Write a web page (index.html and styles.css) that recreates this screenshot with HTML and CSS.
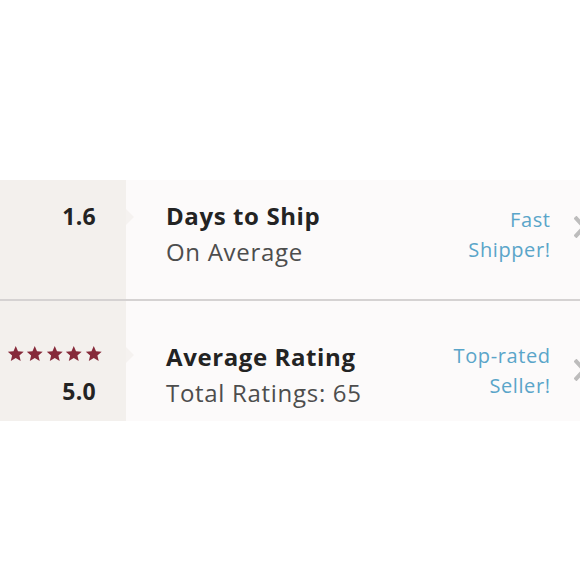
FILE: index.html
```html
<!DOCTYPE html>
<html>
<head>
<meta charset="utf-8">
<link rel="stylesheet" href="styles.css">
</head>
<body>
<div class="panel">
  <div class="row row-ship">
    <div class="score">
      <div class="num">1.6</div>
    </div>
    <div class="detail">
      <div class="text">
        <div class="title">Days to Ship</div>
        <div class="sub">On Average</div>
      </div>
      <div class="badge">Fast<br>Shipper!</div>
      <svg class="chev" width="14" height="22" viewBox="0 0 14 22"><polyline points="1,1 10,11 1,21" fill="none" stroke="#bdbcbc" stroke-width="4"/></svg>
    </div>
  </div>
  <div class="row row-rating">
    <div class="score">
      <div class="stars">
        <svg viewBox="0 0 24 24" class="star"><path d="M12 1.5l3.1 7.2 7.8.6-5.9 5.1 1.8 7.6L12 17.9 5.2 22l1.8-7.6L1.1 9.3l7.8-.6z"/></svg>
        <svg viewBox="0 0 24 24" class="star"><path d="M12 1.5l3.1 7.2 7.8.6-5.9 5.1 1.8 7.6L12 17.9 5.2 22l1.8-7.6L1.1 9.3l7.8-.6z"/></svg>
        <svg viewBox="0 0 24 24" class="star"><path d="M12 1.5l3.1 7.2 7.8.6-5.9 5.1 1.8 7.6L12 17.9 5.2 22l1.8-7.6L1.1 9.3l7.8-.6z"/></svg>
        <svg viewBox="0 0 24 24" class="star"><path d="M12 1.5l3.1 7.2 7.8.6-5.9 5.1 1.8 7.6L12 17.9 5.2 22l1.8-7.6L1.1 9.3l7.8-.6z"/></svg>
        <svg viewBox="0 0 24 24" class="star"><path d="M12 1.5l3.1 7.2 7.8.6-5.9 5.1 1.8 7.6L12 17.9 5.2 22l1.8-7.6L1.1 9.3l7.8-.6z"/></svg>
      </div>
      <div class="num">5.0</div>
    </div>
    <div class="detail">
      <div class="text">
        <div class="title">Average Rating</div>
        <div class="sub">Total Ratings: 65</div>
      </div>
      <div class="badge">Top-rated<br>Seller!</div>
      <svg class="chev" width="14" height="22" viewBox="0 0 14 22"><polyline points="1,1 10,11 1,21" fill="none" stroke="#bdbcbc" stroke-width="4"/></svg>
    </div>
  </div>
</div>
</body>
</html>
```

FILE: styles.css
```css
html, body {
  margin: 0;
  padding: 0;
  background: #ffffff;
  overflow: hidden;
  width: 580px;
  height: 580px;
}

body {
  font-family: "Open Sans", "Lato", sans-serif;
}

.panel {
  margin-top: 180px;
  width: 588px;
}

.row {
  display: grid;
  grid-template-columns: 126px 1fr;
  height: 120px;
  box-sizing: border-box;
}

.row-ship {
  height: 121px;
  border-bottom: 2px solid #d5d2d2;
}

.score {
  position: relative;
  background: #f3f0ed;
  padding-right: 30px;
  display: flex;
  flex-direction: column;
  align-items: flex-end;
}

.score::after {
  content: "";
  position: absolute;
  right: -8px;
  top: 29px;
  border-left: 8px solid #f5f2f0;
  border-top: 8px solid transparent;
  border-bottom: 8px solid transparent;
}

.row-rating .score::after {
  top: 46px;
}

.num {
  font-size: 23px;
  font-weight: 700;
  line-height: 36px;
  letter-spacing: 0.3px;
  color: #232323;
}

.row-ship .score {
  padding-top: 18px;
}

.row-rating .score {
  padding-top: 44px;
}

.stars {
  display: flex;
  gap: 2px;
  margin-right: -6px;
  margin-bottom: 10px;
}

.star {
  width: 17.5px;
  height: 17.5px;
  fill: #862a3a;
}

.detail {
  background: #fcfafa;
  display: flex;
  align-items: flex-start;
  padding-left: 40px;
}

.text {
  flex: 1;
}

.row-ship .text {
  padding-top: 18px;
}

.row-rating .text {
  padding-top: 38px;
}

.title {
  font-size: 24px;
  font-weight: 700;
  line-height: 36px;
  letter-spacing: 0.6px;
  color: #232323;
}

.sub {
  font-size: 24px;
  font-weight: 400;
  line-height: 36px;
  letter-spacing: 0.7px;
  color: #4d4d4d;
}

.badge {
  font-size: 20px;
  line-height: 30px;
  letter-spacing: 0.6px;
  margin-right: -0.6px;
  color: #5aa5c9;
  text-align: right;
}

.row-ship .badge {
  padding-top: 25px;
}

.row-rating .badge {
  padding-top: 40px;
}

.chev {
  margin-left: 24px;
  flex: none;
}

.row-ship .chev {
  margin-top: 36px;
}

.row-rating .chev {
  margin-top: 58px;
}
```
